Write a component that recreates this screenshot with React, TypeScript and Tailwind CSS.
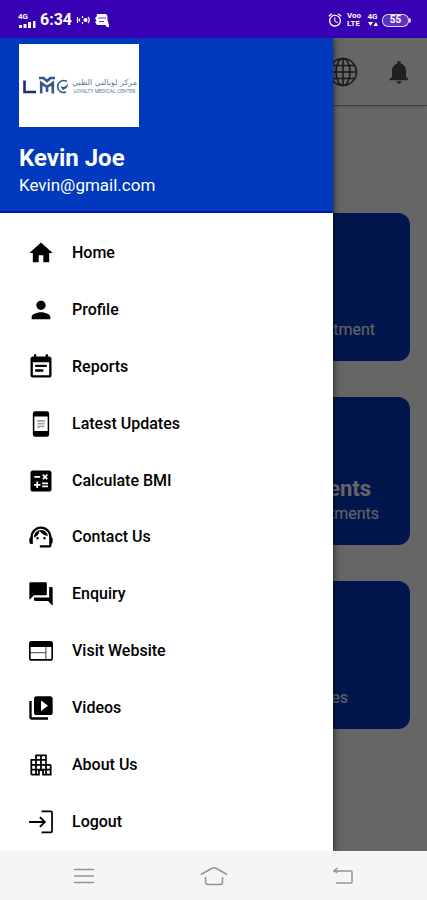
import React from "react";
import {
  MdAlarm,
  MdCalculate,
  MdEventNote,
  MdForum,
  MdHome,
  MdNotifications,
  MdPerson,
  MdSupportAgent,
  MdVideoLibrary,
} from "react-icons/md";

const PhoneIcon: React.FC = () => (
  <svg viewBox="0 0 24 24" className="size-7" fill="currentColor" aria-hidden="true">
    <path
      fillRule="evenodd"
      d="M7 1h10a2 2 0 0 1 2 2v18a2 2 0 0 1-2 2H7a2 2 0 0 1-2-2V3a2 2 0 0 1 2-2zM6.300 5.500v12.500h11.400V5.500z"
    />
    <path d="M8.500 8.500h7v1.600h-7zM9 11h6v1.400H9zM9 13.200h6v1.600h-4L9 16z" opacity="0.350" />
  </svg>
);

const WebIcon: React.FC = () => (
  <svg viewBox="0 0 24 24" className="size-[26px]" fill="none" stroke="currentColor" aria-hidden="true">
    <rect x="1.700" y="3.600" width="20.600" height="16.600" rx="1.600" strokeWidth="1.500" />
    <path d="M1.700 6h20.600" strokeWidth="4.600" />
    <path d="M2 13.500h14.500M16.500 8v12" strokeWidth="1.200" opacity="0.600" />
  </svg>
);

const BuildingIcon: React.FC = () => (
  <svg viewBox="0 0 24 24" className="size-7" fill="none" stroke="currentColor" aria-hidden="true">
    <path
      d="M7.700 20.200V3.700h8.600v16.500M3.700 20.300V7.700h16.600M3.700 20.300h6.500v-4h3.600v4h6.500v-8.600M3.700 11.800h16.600M3.700 16h16.600M12 3.700v12.300"
      strokeWidth="1.500"
    />
    <path d="M17 5h5v5.900h-5z" fill="#fff" stroke="none" />
  </svg>
);

const LogoutIcon: React.FC = () => (
  <svg viewBox="0 0 24 24" className="size-[26px]" fill="none" stroke="currentColor" aria-hidden="true">
    <path d="M12.500 2.200h8.500q1.200 0 1.200 1.200v17q0 1.200-1.200 1.200h-8.500" strokeWidth="1.600" />
    <path d="M1 12h14M11 7.500l4.500 4.500-4.500 4.500" strokeWidth="1.800" />
  </svg>
);

const GlobeIcon: React.FC = () => (
  <svg viewBox="0 0 30 30" className="size-[30px]" fill="none" stroke="currentColor" strokeWidth="1.600" aria-hidden="true">
    <circle cx="15" cy="15" r="13.500" />
    <ellipse cx="15" cy="15" rx="7" ry="13.500" />
    <path d="M15 1.500v27M1.500 15h27M3.500 8.500h23M3.500 21.500h23" />
  </svg>
);

const menuItems = [
  { label: "Home", icon: <MdHome className="size-7" /> },
  { label: "Profile", icon: <MdPerson className="size-7" /> },
  { label: "Reports", icon: <MdEventNote className="size-7" /> },
  { label: "Latest Updates", icon: <PhoneIcon /> },
  { label: "Calculate BMI", icon: <MdCalculate className="size-7" /> },
  { label: "Contact Us", icon: <MdSupportAgent className="size-7" /> },
  { label: "Enquiry", icon: <MdForum className="size-7" /> },
  { label: "Visit Website", icon: <WebIcon /> },
  { label: "Videos", icon: <MdVideoLibrary className="size-7" /> },
  { label: "About Us", icon: <BuildingIcon /> },
  { label: "Logout", icon: <LogoutIcon /> },
];

const StatusBar: React.FC = () => (
  <header className="flex h-[38px] items-center justify-between bg-[#3700b3] pt-[2px] pr-4 pl-[18px] text-white">
    <div className="flex items-center gap-1">
      <div className="flex w-[18px] flex-col">
        <span className="text-[8px] leading-[8px] font-bold">4G</span>
        <svg viewBox="0 0 18 7" className="h-[7px] w-[18px]" fill="currentColor" aria-hidden="true">
          <path d="M1 4h3v3H1zM5.500 3h3v4h-3zM10 1h3v6h-3zM15 0h2.500v7H15z" />
        </svg>
      </div>
      <span className="text-base leading-5 font-bold">6:34</span>
      <svg viewBox="0 0 15 12" className="h-3 w-[15px]" fill="none" stroke="currentColor" strokeWidth="1.200" aria-hidden="true">
        <path d="M1.500 3v6M4 4.500l-1 1.500 1 1.500M6.500 2v2M6.500 8v2M12 3q2.500 3 0 6" />
        <circle cx="9.500" cy="6" r="1.500" fill="currentColor" />
      </svg>
      <svg viewBox="0 0 14 14" className="size-[14px]" fill="currentColor" aria-hidden="true">
        <path d="M2 1h9l1.500 2v4L14 12v2h-2l-2-2H2L0 9l1.500-1L0 5l1.500-1z" />
        <path d="M3 5h8M4 8.500h5" stroke="#3700b3" strokeWidth="0.800" />
      </svg>
    </div>
    <div className="flex items-center gap-1">
      <MdAlarm className="size-4" aria-hidden="true" />
      <div className="flex w-4 flex-col text-[8px] leading-[8px] font-bold">
        <span>Voo</span>
        <span>LTE</span>
      </div>
      <div className="flex w-[11px] flex-col items-center">
        <span className="text-[8px] leading-[8px] font-bold">4G</span>
        <svg viewBox="0 0 10 6" className="h-[6px] w-[10px]" fill="currentColor" aria-hidden="true">
          <path d="M0 1h5L2.500 5zM5.500 5h4.500L8 1z" />
        </svg>
      </div>
      <div className="flex items-center">
        <div className="flex h-[13px] w-[27px] items-center justify-center rounded-md border border-white/80 bg-white/20 text-[10px] leading-[10px] font-bold">
          55
        </div>
        <span className="h-[5px] w-[2px] rounded-r bg-white/80" />
      </div>
    </div>
  </header>
);

const Logo: React.FC = () => (
  <div
    className="flex h-[83px] w-[120px] items-center justify-between bg-white px-[2px]"
    role="img"
    aria-label="Loyalty Medical Center"
  >
    <svg viewBox="0 0 48 20" className="h-5 w-12 shrink-0" fill="none" aria-hidden="true">
      <path d="M3.500 4.500v11.500H15" stroke="#1c2f78" strokeWidth="2.600" />
      <path d="M18 2h4.500l3.500 3 3.500-3H34M20.200 17.500V7l5.800 4 5.800-4v10.500M26 11v5" stroke="#35588c" strokeWidth="2.600" />
      <path d="M46 5.500A6 6 0 1 0 45 16" stroke="#2f5687" strokeWidth="1.500" />
      <path d="M39.500 10q4 3 8-3-1 6-6 7z" fill="#2f5687" />
    </svg>
    <div className="flex flex-col items-center text-[#5c7d9b]">
      <span dir="rtl" className="font-['DejaVu_Sans',sans-serif] text-[8px] leading-[10px] whitespace-nowrap">
        مركز لويالتي الطبي
      </span>
      <span className="text-[5px] leading-[6px] whitespace-nowrap">LOYALTY MEDICAL CENTER</span>
    </div>
  </div>
);

type CardProps = {
  title?: string;
  text: string;
  className: string;
};

const Card: React.FC<CardProps> = ({ title, text, className }) => (
  <section
    className={`flex h-[148px] flex-col items-end justify-end rounded-xl bg-[#0039bd] pb-5 text-white ${className}`}
  >
    {title && <h2 className="pr-2 text-[22px] leading-7 font-bold">{title}</h2>}
    <p className="text-base leading-[22px]">{text}</p>
  </section>
);

const Dashboard: React.FC = () => (
  <div>
    <div className="flex h-[68px] items-center justify-end gap-[27px] border-b border-neutral-400 pr-[14px] shadow-sm">
      <button aria-label="Language" className="text-neutral-700">
        <GlobeIcon />
      </button>
      <button aria-label="Notifications">
        <MdNotifications className="size-7 text-neutral-600" />
      </button>
    </div>
    <div className="flex flex-col gap-9 px-[17px] pt-[107px]">
      <Card text="Appointment" className="pr-[35px]" />
      <Card title="Appointments" text="Appointments" className="pr-[31px]" />
      <Card text="Services" className="pr-[62px]" />
    </div>
  </div>
);

const Drawer: React.FC = () => (
  <aside className="absolute inset-y-0 left-0 flex w-[78%] flex-col bg-white shadow-[1px_0_6px_rgba(0,0,0,0.6)]">
    <div className="flex h-[175px] flex-col border-b-2 border-[#0a12b0] bg-[#0039bd] pt-[6px] pl-[19px] text-white">
      <Logo />
      <h1 className="mt-4 text-2xl leading-[30px] font-bold">Kevin Joe</h1>
      <p className="text-[17px] leading-6">Kevin@gmail.com</p>
    </div>
    <nav className="flex-1 pt-3 pb-px">
      <ul className="flex h-full flex-col">
        {menuItems.map((item) => (
          <li key={item.label} className="flex flex-1">
            <a href="#" className="flex flex-1 items-center gap-[17px] pl-[27px] text-black">
              <span className="flex w-7 justify-center">{item.icon}</span>
              <span className="text-base font-medium">{item.label}</span>
            </a>
          </li>
        ))}
      </ul>
    </nav>
  </aside>
);

const SystemNav: React.FC = () => (
  <footer className="flex h-[49px] items-center bg-[#f5f5f5] px-[19px] text-[#949494]">
    <button aria-label="Recent apps" className="flex flex-1 justify-center">
      <svg viewBox="0 0 20 16" className="h-4 w-5" fill="none" stroke="currentColor" strokeWidth="1.500">
        <path d="M0 1.500h20M0 8h20M0 14.500h20" />
      </svg>
    </button>
    <button aria-label="Home screen" className="flex flex-1 justify-center">
      <svg viewBox="0 0 28 20" className="h-5 w-7" fill="none" stroke="currentColor" strokeWidth="1.500">
        <path d="M1 8.500 11.500 2.500q2.500-1.500 5 0L27 8.500M5.500 11v5q0 2.500 2.500 2.500h12q2.500 0 2.500-2.500v-5" />
      </svg>
    </button>
    <button aria-label="Back" className="flex flex-1 justify-center">
      <svg viewBox="0 0 20 18" className="h-[18px] w-5" fill="none" stroke="currentColor" strokeWidth="1.500">
        <path d="M1 4h17q1 0 1 1v10q0 1-1 1H3M4.500 1 1 4l3.500 1.500" />
      </svg>
    </button>
  </footer>
);

const App: React.FC = () => {
  return (
    <div className="flex min-h-screen flex-col font-[Roboto,sans-serif]">
      <StatusBar />
      <main className="relative flex-1 overflow-hidden bg-white">
        <Dashboard />
        {/* Scrim behind the open drawer */}
        <div className="absolute inset-0 bg-black/60" />
        <Drawer />
      </main>
      <SystemNav />
    </div>
  );
};

export default App;
